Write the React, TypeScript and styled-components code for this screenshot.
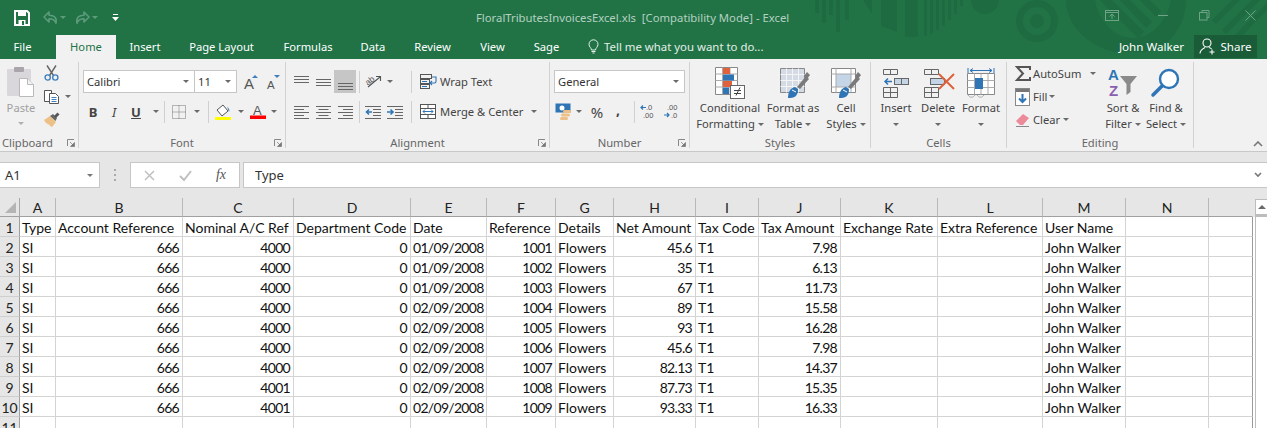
import React from "react";
import styled, { createGlobalStyle } from "styled-components";

const UI = `"Noto Sans", "Open Sans", "Liberation Sans", sans-serif`;
const CELL = `Lato, "Liberation Sans", sans-serif`;

const Global = createGlobalStyle`
  html, body { margin: 0; padding: 0; height: 428px; overflow: hidden; background: #fff; }
  #root { width: 1267px; height: 428px; overflow: hidden; }
`;

const Page = styled.div`
  width: 1267px; height: 428px; overflow: hidden; display: flex; flex-direction: column;
  font-family: ${UI}; background: #e6e6e6;
`;
const Head = styled.header`
  position: relative; height: 59px; background: #217346; flex: none; overflow: hidden;
`;
const Deco = styled.svg`
  position: absolute; left: 0; top: 0; pointer-events: none;
`;
const TitleRow = styled.div`
  position: relative; height: 35px; display: flex; align-items: center; padding-left: 13px;
`;
const Slot = styled.div<{ $w: number }>`
  width: ${p => p.$w}px; flex: none; display: flex; align-items: center; justify-content: center; gap: 3px;
`;
const TitleText = styled.div`
  position: absolute; left: 476px; top: 10px; font-size: 11.3px; line-height: 16px; color: #b3d0c0; white-space: pre;
`;
const WinButtons = styled.div`
  position: absolute; left: 1087px; top: 10px; height: 11px; display: flex; align-items: center;
`;
const TabRow = styled.nav`
  position: relative; height: 24px; display: flex; align-items: stretch;
`;
const Tab = styled.div<{ $w: number; $on?: boolean }>`
  width: ${p => p.$w}px; flex: none; display: flex; align-items: center; justify-content: center;
  font-size: 11.2px; padding-bottom: 1px; box-sizing: border-box;
  color: ${p => (p.$on ? "#217346" : "#fff")};
  background: ${p => (p.$on ? "#f1f1f1" : "transparent")};
`;
const TellMe = styled.div`
  display: flex; align-items: center; gap: 5px; margin-left: 14px; color: #e3efe8; font-size: 11.4px; padding-bottom: 1px;
`;
const User = styled.div`
  margin-left: auto; display: flex; align-items: center; color: #fff; font-size: 11.6px; padding-bottom: 1px;
`;
const Share = styled.div`
  margin: 0 10px 1px 10px; height: 23px; width: 63px; background: #1a5c38; color: #fff; display: flex; align-items: center;
  justify-content: center; gap: 4px; font-size: 11.6px; box-sizing: border-box;
`;

const Ribbon = styled.section`
  height: 93px; flex: none; background: #f1f1f1; border-bottom: 1px solid #c8c8c8; box-sizing: border-box;
  display: flex; padding-top: 3px; position: relative;
`;
const Group = styled.div<{ $w: number }>`
  width: ${p => p.$w}px; flex: none; height: 86px; box-sizing: border-box; border-right: 1px solid #d2d2d2;
  display: flex; flex-direction: column; position: relative;
`;
const GroupBody = styled.div`
  height: 74px; flex: none; display: flex;
`;
const GroupLabel = styled.div<{ $left?: boolean }>`
  height: 12px; line-height: 14px; font-size: 11.2px; color: #666;
  text-align: ${p => (p.$left ? "left" : "center")}; padding-left: ${p => (p.$left ? 2 : 0)}px;
`;
const Launcher = styled.svg`
  position: absolute; right: 3px; bottom: 1px;
`;
const Stack = styled.div<{ $pl?: number; $gap?: number; $pt?: number; $w?: number }>`
  display: flex; flex-direction: column; padding-left: ${p => p.$pl ?? 0}px; gap: ${p => p.$gap ?? 6}px; padding-top: ${p => p.$pt ?? 8}px;
  ${p => (p.$w ? `width: ${p.$w}px; flex: none;` : "")}
`;
const Row = styled.div<{ $h?: number }>`
  display: flex; align-items: center; height: ${p => p.$h ?? 23}px;
`;
const Sep = styled.div<{ $m?: number }>`
  width: 1px; height: 22px; background: #d0d0d0; flex: none; margin: 0 ${p => p.$m ?? 0}px;
`;
const Caret = styled.span<{ $c?: string }>`
  display: inline-block; width: 0; height: 0; flex: none;
  border-left: 3px solid transparent; border-right: 3px solid transparent; border-top: 3px solid ${p => p.$c ?? "#6a6a6a"};
`;
const Combo = styled.div<{ $w: number; $joined?: boolean }>`
  width: ${p => p.$w}px; height: 23px; flex: none; box-sizing: border-box; background: #fff; border: 1px solid #c6c6c6;
  ${p => (p.$joined ? "border-right: none;" : "")}
  display: flex; align-items: center; justify-content: space-between; padding: 0 5px 0 3px;
  font-family: ${UI}; font-size: 11.2px; color: #333;
`;
const Active = styled.div`
  width: 22px; height: 23px; background: #c6c6c6; display: flex; align-items: flex-end; justify-content: center; flex: none;
  padding-bottom: 3px; box-sizing: border-box;
`;
const TopAligned = styled(Slot)`
  padding-bottom: 6px;
`;
const BtnText = styled.span<{ $c?: string }>`
  font-size: 11.2px; color: ${p => p.$c ?? "#444"}; white-space: nowrap;
`;
const Percent = styled(BtnText)`
  font-size: 15px;
`;
const Comma = styled(BtnText)`
  font-size: 14px; font-weight: 700; padding-bottom: 4px;
`;
const FontLetter = styled.span<{ $b?: boolean; $i?: boolean; $u?: boolean }>`
  font-family: ${UI}; font-size: 13px; color: #444;
  font-weight: ${p => (p.$b ? 700 : 400)}; font-style: ${p => (p.$i ? "italic" : "normal")};
  text-decoration: ${p => (p.$u ? "underline" : "none")};
`;
const PasteCol = styled.div`
  width: 40px; flex: none; display: flex; flex-direction: column; align-items: center; padding: 4px 0 0 0; margin-left: 1px;
`;
const PasteText = styled.div`
  font-size: 11.2px; color: #a0a0a0; margin-top: 4px; line-height: 14px;
`;
const PasteCaret = styled(Slot)`
  margin-top: 7px;
`;
const ClipCol = styled.div`
  display: flex; flex-direction: column; width: 36px; gap: 5px; padding-top: 3px;
`;
const CopyRow = styled(Slot)`
  justify-content: flex-start; gap: 6px; height: 21px; padding-left: 3px; box-sizing: border-box;
`;
const Big = styled.div<{ $w: number }>`
  width: ${p => p.$w}px; flex: none; display: flex; flex-direction: column; align-items: center; padding-top: 4px;
`;
const BigIcon = styled.div<{ $shift?: number }>`
  height: 34px; display: flex; align-items: center; justify-content: center; padding-left: ${p => p.$shift ?? 0}px;
`;
const BigText = styled.div`
  font-size: 11.2px; color: #444; line-height: 16px; text-align: center; white-space: nowrap;
  display: flex; flex-direction: column; align-items: center;
`;
const CaretLine = styled.span`
  display: flex; align-items: center; gap: 3px; height: 16px;
`;
const Collapse = styled.svg`
  position: absolute; left: 1253px; top: 82px;
`;

const FormulaBar = styled.div`
  height: 46px; flex: none; box-sizing: border-box; padding: 10px 0 0 0; display: flex; align-items: flex-start; background: #e6e6e6;
`;
const NameBox = styled.div`
  width: 100px; height: 26px; box-sizing: border-box; background: #fff; border: 1px solid #c6c6c6; border-left: none; flex: none;
  display: flex; align-items: center; justify-content: space-between; padding: 0 6px 0 5px; font-size: 13px; color: #333;
`;
const Dots = styled.div`
  width: 30px; flex: none; height: 26px; display: flex; align-items: center; justify-content: center;
`;
const FxBox = styled.div`
  width: 110px; height: 26px; box-sizing: border-box; background: #fff; border: 1px solid #c6c6c6; flex: none; display: flex; align-items: center;
`;
const Fx = styled.span`
  font-family: "Liberation Serif", serif; font-style: italic; font-size: 14px; color: #555;
`;
const Input = styled.div`
  margin-left: 3px; flex: 1; height: 26px; box-sizing: border-box; background: #fff; border: 1px solid #c6c6c6; border-right: none;
  display: flex; align-items: center; justify-content: space-between; padding: 0 5px 0 11px; font-size: 13px; color: #333;
`;

const Sheet = styled.main`
  flex: 1; display: flex; min-height: 0; overflow: hidden;
`;
const COLS = [36, 127, 111, 117, 76, 69, 58, 82, 63, 82, 97, 105, 83, 83, 44];
const Grid = styled.div`
  width: 1253px; flex: none; display: grid; grid-template-columns: 20px ${COLS.map(c => c + "px").join(" ")};
  grid-template-rows: 19px repeat(11, 20px); background: #fff; align-content: start;
`;
const Corner = styled.div`
  background: #e6e6e6; border-right: 1px solid #a8a8a8; border-bottom: 1px solid #a0a0a0; box-sizing: border-box;
  display: flex; align-items: flex-end; justify-content: flex-end; padding: 0 2px 2px 0;
`;
const ColHead = styled.div<{ $last?: boolean }>`
  background: #e6e6e6; border-right: 1px solid ${p => (p.$last ? "#e6e6e6" : "#b8b8b8")}; border-bottom: 1px solid #a0a0a0; box-sizing: border-box;
  display: flex; align-items: center; justify-content: center; font-family: ${CELL}; font-size: 14px; color: #222; padding-top: 1px;
`;
const RowHead = styled.div`
  background: #e6e6e6; border-right: 1px solid #a0a0a0; border-bottom: 1px solid #cfcfcf; box-sizing: border-box;
  display: flex; align-items: center; justify-content: center; font-family: ${CELL}; font-size: 14px; color: #222; padding-top: 1px;
`;
const Cell = styled.div<{ $r?: boolean; $last?: boolean }>`
  border-right: 1px solid ${p => (p.$last ? "#9a9a9a" : "#d4d4d4")}; border-bottom: 1px solid #d4d4d4; box-sizing: border-box; background: #fff;
  font-family: ${CELL}; font-size: 14px; color: #111; line-height: 19px; white-space: nowrap; overflow: hidden;
  text-align: ${p => (p.$r ? "right" : "left")}; padding: 1px 3px 0 2px;
  letter-spacing: ${p => (p.$r ? "-0.7px" : "0")};
`;
const Scroll = styled.div`
  flex: 1; display: flex; flex-direction: column; background: #fff;
`;
const ScrollTop = styled.div`
  height: 19px; background: #e6e6e6; flex: none; box-sizing: border-box; padding: 1px 0 0 2px;
`;
const ScrollUp = styled.div`
  height: 18px; background: #fff; border: 1px solid #bdbdbd; border-bottom-width: 3px; border-right: none; box-sizing: border-box;
  display: flex; align-items: center; justify-content: center;
`;
const ScrollUpArrow = styled.span`
  width: 0; height: 0; border-left: 4px solid transparent; border-right: 4px solid transparent; border-bottom: 4px solid #6a6a6a;
`;
const ScrollTrack = styled.div`
  flex: 1; background: #fff; margin-left: 2px; border-left: 1px solid #bdbdbd;
`;

const Svg = styled.svg`
  display: block; flex: none; overflow: visible;
`;
const Ico = ({ w, h, children }: { w: number; h: number; children: React.ReactNode }) => (
  <Svg width={w} height={h} viewBox={`0 0 ${w} ${h}`}>{children}</Svg>
);

const Launch = () => (
  <Launcher width={8} height={8} viewBox="0 0 8 8">
    <path d="M0.5 7V.5H7" fill="none" stroke="#888" />
    <path d="M3 3l3.5 3.5M7.5 3.5v4h-4z" fill="#777" stroke="#777" strokeWidth=".7" />
  </Launcher>
);

const Save = () => (
  <Ico w={16} h={16}>
    <path d="M1 1h12l2 2v12H1z" fill="none" stroke="#fff" strokeWidth="2" />
    <rect x="4" y="1" width="8" height="5" fill="#fff" />
    <rect x="4.5" y="10" width="7" height="5" fill="#fff" />
    <rect x="8" y="11" width="2" height="4" fill="#217346" />
  </Ico>
);
const Undo = ({ flip }: { flip?: boolean }) => (
  <Ico w={15} h={13}>
    <g transform={flip ? "translate(15 0) scale(-1 1)" : undefined}>
      <path d="M1 6l5-5v3.2c5 0 8 2 7 8-1-3-3-4.5-7-4.5V11z" fill="none" stroke="#5d9c7b" strokeWidth="1.6" strokeLinejoin="round" />
    </g>
  </Ico>
);
const Customize = () => (
  <Ico w={7} h={8}>
    <rect x="1" y="0" width="5" height="1" fill="#fff" />
    <path d="M0 3h7L3.5 7z" fill="#fff" />
  </Ico>
);
const WinTile = () => (
  <Ico w={14} h={11}>
    <rect x=".5" y=".5" width="13" height="10" fill="none" stroke="#6ea386" />
    <path d="M1 2.5h12M7 9V4.5M4.5 6.5 7 4l2.5 2.500" fill="none" stroke="#6ea386" />
  </Ico>
);
const WinMin = () => <Ico w={10} h={1}><rect width="10" height="1" fill="#6ea386" /></Ico>;
const WinMax = () => (
  <Ico w={11} h={11}>
    <path d="M3 2.5V.5h7v7H8" fill="none" stroke="#6ea386" />
    <rect x=".5" y="2.5" width="7.5" height="7.5" fill="#217346" stroke="#6ea386" />
  </Ico>
);
const WinClose = () => <Ico w={11} h={11}><path d="M.5.5l10 10M10.5.5l-10 10" stroke="#6ea386" /></Ico>;

const Bulb = () => (
  <Ico w={11} h={15}>
    <path d="M3.5 11c0-2-2.5-3-2.5-5.7a4.5 4.5 0 019 0C10 8 7.5 9 7.5 11z" fill="none" stroke="#e3efe8" />
    <path d="M3.5 12.5h4M4.5 14h2" stroke="#e3efe8" />
  </Ico>
);
const Person = () => (
  <Ico w={17} h={17}>
    <circle cx="8" cy="5" r="4" fill="none" stroke="#fff" strokeWidth="1.1" />
    <path d="M1 15.5c0-3.500 3-5 5-6M10 9.500c1 .3 2 .8 2.600 1.500" fill="none" stroke="#fff" strokeWidth="1.1" />
    <path d="M13 11.500v5M10.500 14h5" stroke="#fff" strokeWidth="1.1" />
  </Ico>
);

const PasteIcon = () => (
  <Ico w={30} h={31}>
    <rect x="1" y="3" width="24" height="27" rx="1" fill="#dad7dc" />
    <rect x="8" y="1" width="10" height="5" rx="1" fill="#a9a5aa" />
    <path d="M13.500 12.500h8l6 6v12h-14z" fill="#fff" stroke="#b9b9b9" />
    <path d="M21.500 12.500v6h6" fill="#f1f1f1" stroke="#b9b9b9" />
  </Ico>
);
const Scissors = () => (
  <Ico w={15} h={16}>
    <path d="M3 .5l6.500 10M12 .5L5.500 10.500" stroke="#666" strokeWidth="1.4" fill="none" />
    <circle cx="3.700" cy="12.500" r="2.600" fill="none" stroke="#3f7fbf" strokeWidth="1.4" />
    <circle cx="11.300" cy="12.500" r="2.600" fill="none" stroke="#3f7fbf" strokeWidth="1.4" />
  </Ico>
);
const Copy = () => (
  <Ico w={15} h={14}>
    <path d="M.5.5h7v11h-7z" fill="#fff" stroke="#555" />
    <path d="M5.500 3.500h6l3 3v7h-9z" fill="#fff" stroke="#555" />
    <path d="M7.500 7.500h5M7.500 9.500h5M7.500 11.500h5" stroke="#3f7fbf" />
  </Ico>
);
const Brush = () => (
  <Ico w={17} h={15}>
    <path d="M1 8l6-4 6 6-4 5-2-1-1-2-1 1-1-2-1 .3z" fill="#edc087" />
    <path d="M7 4l3-2 4 4-1.500 3z" fill="#666" />
    <path d="M11 4l3.500-3.500 2 2L13 6z" fill="#555" />
  </Ico>
);
const GrowA = ({ up }: { up?: boolean }) => (
  <Ico w={14} h={16}>
    {up
      ? <text x="0" y="15" fontFamily="Liberation Sans" fontSize="15" fill="#555">A</text>
      : <text x="1" y="15" fontFamily="Liberation Sans" fontSize="11.500" fill="#555">A</text>}
    <path d={up ? "M8 4l3-3 3 3z" : "M8 1h6l-3 3z"} fill="#3f7fbf" />
  </Ico>
);
const AlignV = () => (
  <Ico w={15} h={8}>
    <rect y="1" width="15" height="1" fill="#666" />
    <rect y="4" width="15" height="1" fill="#666" />
    <rect y="7" width="15" height="1" fill="#666" />
  </Ico>
);
const AlignH = ({ k }: { k: "l" | "c" | "r" }) => {
  const rows = [15, 10, 15, 10, 15];
  return (
    <Ico w={15} h={14}>
      {rows.map((w, i) => (
        <rect key={i} x={k === "l" ? 0 : k === "c" ? (15 - w) / 2 : 15 - w} y={1 + i * 3} width={w} height={1} fill="#666" />
      ))}
    </Ico>
  );
};
const Orient = () => (
  <Ico w={17} h={15}>
    <text x="1" y="9" fontFamily="Liberation Sans" fontSize="8.500" fill="#555" transform="rotate(-38 6 8)">ab</text>
    <path d="M3 13L15 3M11 2.500h4.500V7" fill="none" stroke="#555" strokeWidth="1.1" />
  </Ico>
);
const Indent = ({ inc }: { inc?: boolean }) => (
  <Ico w={16} h={14}>
    {[1, 4, 7, 10, 13].map((y, i) => (
      <rect key={y} x={i === 0 || i === 4 ? 0 : 8} y={y} width={i === 0 || i === 4 ? 16 : 8} height={1} fill="#666" />
    ))}
    <path d={inc ? "M0 7h5M3.500 4.500 6 7l-2.500 2.500" : "M7 7H1.500M4 4.500 1.500 7 4 9.500"} fill="none" stroke="#2f75b5" strokeWidth="1.6" />
  </Ico>
);
const WrapIcon = () => (
  <Ico w={17} h={15}>
    <rect x=".5" y=".5" width="11" height="4" fill="none" stroke="#555" />
    <rect x=".5" y="5.500" width="9" height="4" fill="none" stroke="#555" />
    <rect x=".5" y="10.500" width="9" height="4" fill="none" stroke="#555" />
    <path d="M12 3h4v4.500c0 1-.5 1.500-1.500 1.500H10M12 7l-2 2 2 2" fill="none" stroke="#2f75b5" strokeWidth="1.1" />
    <path d="M2 7.500h5M2 12.500h5" stroke="#2f75b5" />
  </Ico>
);
const MergeIcon = () => (
  <Ico w={16} h={15}>
    <rect x=".5" y=".5" width="15" height="14" fill="#fff" stroke="#555" />
    <path d="M.5 4.500h15M.5 10.500h15M8 .5v4M8 10.500v4" stroke="#555" />
    <path d="M3 7.500h10M5 5.500l-2 2 2 2M11 5.500l2 2-2 2" fill="none" stroke="#2f75b5" />
  </Ico>
);
const BorderIcon = () => (
  <Ico w={14} h={14}>
    <path d="M.5.5h13v13h-13zM7 .5v13M.5 7h13" fill="none" stroke="#777" strokeDasharray="1 1" />
  </Ico>
);
const Fill = () => (
  <Ico w={17} h={16}>
    <path d="M2 6l6-5 5 6-6 5z" fill="#fff" stroke="#555" />
    <path d="M12 3c2 1 3 3 2 5l-1-3z" fill="#2f75b5" />
    <rect x="0" y="13" width="16" height="3" fill="#ffff00" />
  </Ico>
);
const FontColor = () => (
  <Ico w={16} h={15}>
    <text x="3" y="11" fontFamily="Liberation Sans" fontSize="13" fill="#555">A</text>
    <rect x="0" y="11.500" width="16" height="3.500" fill="#f00" />
  </Ico>
);
const Currency = () => (
  <Ico w={16} h={17}>
    <rect x=".5" y=".5" width="15" height="9" fill="#2f75b5" />
    <circle cx="7" cy="5" r="2.500" fill="#fff" />
    <rect x="8" y="7" width="8" height="3" rx="1.500" fill="#edc087" />
    <rect x="6" y="10.500" width="9" height="3" rx="1.500" fill="#edc087" />
    <rect x="5" y="14" width="8" height="3" rx="1.500" fill="#edc087" />
  </Ico>
);
const DecIcon = ({ more }: { more?: boolean }) => (
  <Ico w={15} h={15}>
    <text x={more ? 3 : 6} y="6" fontFamily="Liberation Sans" fontSize="7.500" fill="#555">{more ? ".00" : ".0"}</text>
    <text x={more ? 7 : 3} y="14" fontFamily="Liberation Sans" fontSize="7.500" fill="#555">{more ? ".0" : ".00"}</text>
    <path d={more ? "M0 11h5M3 9l2 2-2 2" : "M6 3.500H1M3 1.500l-2 2 2 2"} fill="none" stroke="#2f75b5" strokeWidth="1.2" />
  </Ico>
);
const CondFormat = () => (
  <Ico w={30} h={32}>
    <path d="M.5.500h22v27h-22z" fill="#fff" stroke="#888" />
    <path d="M7.500.500v27M15 .500v27M.5 7h22M.5 13.500h22M.5 20h22" stroke="#aaa" fill="none" />
    <rect x="8" y="1" width="7" height="6" fill="#e0613a" />
    <rect x="8" y="7.500" width="11" height="6" fill="#2f75b5" />
    <rect x="8" y="14" width="9" height="6" fill="#e0613a" />
    <rect x="8" y="20.500" width="6" height="6.500" fill="#2f75b5" />
    <rect x="15.500" y="18.500" width="14" height="13" fill="#fff" stroke="#666" />
    <path d="M19 23.500h7M19 26.500h7M25 20.500l-4 8" stroke="#444" fill="none" />
  </Ico>
);
const FormatTable = () => (
  <Ico w={30} h={32}>
    <path d="M.5 1.500h24v24h-24z" fill="#d4dbe5" stroke="#888" />
    <path d="M6.500 1.500v24M12.500 1.500v24M18.500 1.500v24M.5 7.500h24M.5 13.500h24M.5 19.500h24" stroke="#f4f4f4" fill="none" />
    <path d="M17 20l9-11 3 3-9 10z" fill="#7a7a7a" />
    <path d="M24 9l3-4 3 3-3 4z" fill="#7a7a7a" />
    <path d="M8 31c6 0 10-1 10-9l-3-2c-5 1-7 6-7 11z" fill="#2f75b5" />
    <path d="M12 23l4 2" stroke="#fff" />
  </Ico>
);
const CellStyles = () => (
  <Ico w={30} h={32}>
    <path d="M.5 1.500h24v24h-24z" fill="#fff" stroke="#888" />
    <rect x="5" y="7" width="15" height="13" fill="#c5d5e8" />
    <path d="M5 1.500v24M20 1.500v24M.5 7h24M.5 20h24" stroke="#aaa" fill="none" />
    <path d="M17 20l9-11 3 3-9 10z" fill="#7a7a7a" />
    <path d="M24 9l3-4 3 3-3 4z" fill="#7a7a7a" />
    <path d="M8 31c6 0 10-1 10-9l-3-2c-5 1-7 6-7 11z" fill="#2f75b5" />
    <path d="M12 23l4 2" stroke="#fff" />
  </Ico>
);
const InsertIcon = () => (
  <Ico w={26} h={29}>
    <path d="M.5.500h14v5h-14zM7.500.500v5M.5 18.500h14v10h-14zM7.500 18.500v10M.5 23.500h14" fill="none" stroke="#666" />
    <rect x="11.500" y="9.500" width="14" height="6" fill="#c5d5e8" stroke="#666" />
    <path d="M18.500 9.500v6" stroke="#666" />
    <path d="M9 12.500H2M5 9.500l-3 3 3 3" fill="none" stroke="#2f75b5" strokeWidth="1.500" />
  </Ico>
);
const DeleteIcon = () => (
  <Ico w={32} h={29}>
    <path d="M.5.500h14v5h-14zM7.500.500v5M.5 18.500h14v10h-14zM7.500 18.500v10M.5 23.500h14" fill="none" stroke="#666" />
    <rect x="6.500" y="9.500" width="14" height="6" fill="#c5d5e8" stroke="#666" />
    <path d="M15 5l15 15M30 5L15 20" stroke="#e0613a" strokeWidth="2" />
  </Ico>
);
const FormatIcon = () => (
  <Ico w={28} h={31}>
    <path d="M1 0v5M27 0v5M3 2.500h22M6 .500 3 2.500l3 2M22 .500l3 2-3 2" fill="none" stroke="#2f75b5" />
    <path d="M.5 5.500h27v21h-27z" fill="#fff" stroke="#888" />
    <path d="M7.500 5.500v21M14 5.500v21M21 5.500v21M.5 12.500h27M.5 19.500h27" stroke="#aaa" fill="none" />
    <rect x="8" y="10" width="8" height="11" fill="#2f75b5" />
    <path d="M1 27c2 3 5 3 7 0M10 27c2 3 5 3 7 0" fill="none" stroke="#aaa" />
  </Ico>
);
const Sigma = () => (
  <Ico w={16} h={15}>
    <path d="M15 4V1H2l6 6.500L2 14h13v-3" fill="none" stroke="#555" strokeWidth="2" />
  </Ico>
);
const FillDown = () => (
  <Ico w={15} h={18}>
    <rect x=".5" y=".5" width="14" height="17" fill="#fff" stroke="#888" />
    <rect x="1" y="1" width="13" height="3" fill="#777" />
    <path d="M7.500 6v8M4 10.500l3.500 3.500 3.500-3.500" fill="none" stroke="#2f75b5" strokeWidth="2" />
  </Ico>
);
const Eraser = () => (
  <Ico w={15} h={15}>
    <path d="M1 9l7-7 6 4-6 7H5z" fill="#ec8a9a" />
    <path d="M1 14.500h13" stroke="#888" />
  </Ico>
);
const SortIcon = () => (
  <Ico w={30} h={30}>
    <text x="0" y="12" fontFamily="Liberation Sans" fontWeight="700" fontSize="15" fill="#2f75b5">A</text>
    <text x="1" y="28" fontFamily="Liberation Sans" fontWeight="700" fontSize="15" fill="#8a5fb0">Z</text>
    <path d="M12 8h17l-6.500 8v8l-4 3V16z" fill="#8a8a8a" />
  </Ico>
);
const FindIcon = () => (
  <Ico w={30} h={30}>
    <circle cx="18" cy="11" r="9" fill="#fff" stroke="#2f75b5" strokeWidth="2.400" />
    <path d="M11 18L2 27" stroke="#2f75b5" strokeWidth="3.500" strokeLinecap="round" />
  </Ico>
);
const Triangle = () => (
  <Ico w={12} h={12}><path d="M11 0v11H0z" fill="#b4b4b4" /></Ico>
);
const CloseX = () => <Ico w={11} h={11}><path d="M1 1l9 9M10 1l-9 9" stroke="#c0c0c0" strokeWidth="1.500" /></Ico>;
const CheckX = () => <Ico w={13} h={11}><path d="M1 6l4 4 7-9" fill="none" stroke="#c0c0c0" strokeWidth="2" /></Ico>;
const DotsIcon = () => (
  <Ico w={3} h={13}>
    <rect y="0" width="2" height="2" fill="#aaa" /><rect y="5" width="2" height="2" fill="#aaa" /><rect y="10" width="2" height="2" fill="#aaa" />
  </Ico>
);
const Chevron = () => <Ico w={8} h={6}><path d="M1 1l3 3 3-3" fill="none" stroke="#777" strokeWidth="1.600" /></Ico>;

const TABS: [string, number][] = [["Insert", 58], ["Page Layout", 95], ["Formulas", 78], ["Data", 52], ["Review", 67], ["View", 53], ["Sage", 55]];
const HEADERS = ["Type", "Account Reference", "Nominal A/C Ref", "Department Code", "Date", "Reference", "Details", "Net Amount", "Tax Code", "Tax Amount", "Exchange Rate", "Extra Reference", "User Name", "", ""];
const LETTERS = ["A", "B", "C", "D", "E", "F", "G", "H", "I", "J", "K", "L", "M", "N", ""];
const DATA: [string, string, string, string, string][] = [
  ["4000", "01/09/2008", "1001", "45.6", "7.98"],
  ["4000", "01/09/2008", "1002", "35", "6.13"],
  ["4000", "01/09/2008", "1003", "67", "11.73"],
  ["4000", "02/09/2008", "1004", "89", "15.58"],
  ["4000", "02/09/2008", "1005", "93", "16.28"],
  ["4000", "02/09/2008", "1006", "45.6", "7.98"],
  ["4000", "02/09/2008", "1007", "82.13", "14.37"],
  ["4001", "02/09/2008", "1008", "87.73", "15.35"],
  ["4001", "02/09/2008", "1009", "93.33", "16.33"],
];

const Decoration = () => (
  <Deco width={1267} height={59} viewBox="0 0 1267 59">
    <g fill="#1f6b41">
      {[[815, 13], [822, 23], [829, 15], [836, 32], [845, 20]].map(([x, h]) => <rect key={x} x={x} y={0} width={4} height={h} />)}
      <path d="M863 0l9 14V0zM881 0h16v32l-16-6zM905 0h13v37h-13zM924 0h3v36h-3zM930 0h3v34h-3zM936 0h3v30h-3zM942 0h3v26h-3zM948 0h3v20h-3zM954 0h3v14h-3zM960 0h3v6h-3z" />
      <circle cx="985" cy="0" r="14" />
      <path fillRule="evenodd" d="M1037 0a21 21 0 100 42 21 21 0 000-42zm0 7a14 14 0 110 28 14 14 0 010-28z" />
      <circle cx="1037" cy="21" r="7" />
      <path d="M1066 0h120c0 28-20 52-45 52h-28c-28-8-47-28-47-52z" />
      <path d="M1095 0h76c-4 22-20 38-38 38-18 0-34-16-38-38z" fill="#217346" />
      <path d="M1100 0l38 38 6-6-32-32zM1120 0l26 28 6-6-22-22zM1140 0l16 17 5-6-11-11z" fill="#1f6b41" />
      <path d="M1212 20l20-20h8l-24 24zM1222 30l30-30h8l-34 34zM1235 35l35-35v7l-30 31z" />
    </g>
  </Deco>
);

export default function App() {
  return (
    <Page>
      <Global />
      <Head>
        <Decoration />
        <TitleRow>
          <Slot $w={18}><Save /></Slot>
          <Slot $w={12} />
          <Undo /><Slot $w={10}><Caret $c="#5d9c7b" /></Slot>
          <Slot $w={7} />
          <Undo flip /><Slot $w={10}><Caret $c="#5d9c7b" /></Slot>
          <Slot $w={12} />
          <Customize />
        </TitleRow>
        <TitleText>FloralTributesInvoicesExcel.xls  [Compatibility Mode] - Excel</TitleText>
        <WinButtons>
          <Slot $w={50}><WinTile /></Slot>
          <Slot $w={52}><WinMin /></Slot>
          <Slot $w={31}><WinMax /></Slot>
          <Slot $w={60}><WinClose /></Slot>
        </WinButtons>
        <TabRow>
          <Tab $w={45}>File</Tab>
          <Slot $w={11} />
          <Tab $w={60} $on>Home</Tab>
          {TABS.map(([t, w]) => <Tab key={t} $w={w}>{t}</Tab>)}
          <TellMe><Bulb />Tell me what you want to do...</TellMe>
          <User>John Walker<Share><Person />Share</Share></User>
        </TabRow>
      </Head>

      <Ribbon>
        <Group $w={79}>
          <GroupBody>
            <PasteCol>
              <PasteIcon />
              <PasteText>Paste</PasteText>
              <PasteCaret $w={20}><Caret $c="#b0b0b0" /></PasteCaret>
            </PasteCol>
            <ClipCol>
              <Slot $w={20}><Scissors /></Slot>
              <CopyRow $w={36}><Copy /><Caret /></CopyRow>
              <Slot $w={20}><Brush /></Slot>
            </ClipCol>
          </GroupBody>
          <GroupLabel $left>Clipboard</GroupLabel>
          <Launch />
        </Group>

        <Group $w={207}>
          <GroupBody>
            <Stack $pl={4}>
              <Row>
                <Combo $w={111} $joined>Calibri<Caret /></Combo>
                <Combo $w={43}>11<Caret /></Combo>
                <Slot $w={6} />
                <Slot $w={15}><GrowA up /></Slot>
                <Slot $w={7} />
                <Slot $w={15}><GrowA /></Slot>
              </Row>
              <Row $h={25}>
                <Slot $w={20}><FontLetter $b>B</FontLetter></Slot>
                <Slot $w={22}><FontLetter $i>I</FontLetter></Slot>
                <Slot $w={22}><FontLetter $u $b>U</FontLetter></Slot>
                <Slot $w={17}><Caret /></Slot>
                <Sep />
                <Slot $w={28}><BorderIcon /></Slot>
                <Slot $w={8}><Caret /></Slot>
                <Slot $w={7} />
                <Sep />
                <Slot $w={28}><Fill /></Slot>
                <Slot $w={8}><Caret /></Slot>
                <Slot $w={26}><FontColor /></Slot>
                <Slot $w={6}><Caret /></Slot>
              </Row>
            </Stack>
          </GroupBody>
          <GroupLabel>Font</GroupLabel>
          <Launch />
        </Group>

        <Group $w={264}>
          <GroupBody>
            <Stack $pl={4}>
              <Row>
                <TopAligned $w={22}><AlignV /></TopAligned>
                <Slot $w={22}><AlignV /></Slot>
                <Active><AlignV /></Active>
                <Sep $m={3} />
                <Slot $w={20}><Orient /></Slot>
                <Slot $w={14}><Caret /></Slot>
                <Slot $w={14} />
                <Sep />
                <Slot $w={8} />
                <WrapIcon />
                <Slot $w={3} />
                <BtnText>Wrap Text</BtnText>
              </Row>
              <Row $h={25}>
                <Slot $w={22}><AlignH k="l" /></Slot>
                <Slot $w={22}><AlignH k="c" /></Slot>
                <Slot $w={22}><AlignH k="r" /></Slot>
                <Sep $m={3} />
                <Slot $w={20}><Indent /></Slot>
                <Slot $w={24}><Indent inc /></Slot>
                <Slot $w={4} />
                <Sep />
                <Slot $w={8} />
                <MergeIcon />
                <Slot $w={4} />
                <BtnText>Merge &amp; Center</BtnText>
                <Slot $w={22}><Caret /></Slot>
              </Row>
            </Stack>
          </GroupBody>
          <GroupLabel>Alignment</GroupLabel>
          <Launch />
        </Group>

        <Group $w={140}>
          <GroupBody>
            <Stack $pl={4}>
              <Row><Combo $w={131}>General<Caret /></Combo></Row>
              <Row $h={25}>
                <Slot $w={18}><Currency /></Slot>
                <Slot $w={14}><Caret /></Slot>
                <Slot $w={22}><Percent>%</Percent></Slot>
                <Slot $w={20}><Comma>,</Comma></Slot>
                <Slot $w={6} />
                <Sep />
                <Slot $w={24}><DecIcon /></Slot>
                <Slot $w={24}><DecIcon more /></Slot>
              </Row>
            </Stack>
          </GroupBody>
          <GroupLabel>Number</GroupLabel>
          <Launch />
        </Group>

        <Group $w={181}>
          <GroupBody>
            <Slot $w={8} />
            <Big $w={64}>
              <BigIcon><CondFormat /></BigIcon>
              <BigText>Conditional<CaretLine>Formatting <Caret /></CaretLine></BigText>
            </Big>
            <Big $w={62}>
              <BigIcon $shift={4}><FormatTable /></BigIcon>
              <BigText>Format as<CaretLine>Table <Caret /></CaretLine></BigText>
            </Big>
            <Big $w={44}>
              <BigIcon><CellStyles /></BigIcon>
              <BigText>Cell<CaretLine>Styles <Caret /></CaretLine></BigText>
            </Big>
          </GroupBody>
          <GroupLabel>Styles</GroupLabel>
        </Group>

        <Group $w={136}>
          <GroupBody>
            <Slot $w={4} />
            <Big $w={42}>
              <BigIcon><InsertIcon /></BigIcon>
              <BigText>Insert<CaretLine><Caret /></CaretLine></BigText>
            </Big>
            <Big $w={42}>
              <BigIcon $shift={3}><DeleteIcon /></BigIcon>
              <BigText>Delete<CaretLine><Caret /></CaretLine></BigText>
            </Big>
            <Big $w={44}>
              <BigIcon><FormatIcon /></BigIcon>
              <BigText>Format<CaretLine><Caret /></CaretLine></BigText>
            </Big>
          </GroupBody>
          <GroupLabel>Cells</GroupLabel>
        </Group>

        <Group $w={187}>
          <GroupBody>
            <Stack $pl={5} $gap={0} $pt={0} $w={90}>
              <Row><Slot $w={21}><Sigma /></Slot><BtnText>AutoSum</BtnText><Slot $w={24}><Caret /></Slot></Row>
              <Row><Slot $w={21}><FillDown /></Slot><BtnText>Fill</BtnText><Slot $w={10}><Caret /></Slot></Row>
              <Row><Slot $w={21}><Eraser /></Slot><BtnText>Clear</BtnText><Slot $w={12}><Caret /></Slot></Row>
            </Stack>
            <Big $w={42}>
              <BigIcon><SortIcon /></BigIcon>
              <BigText>Sort &amp;<CaretLine>Filter <Caret /></CaretLine></BigText>
            </Big>
            <Big $w={44}>
              <BigIcon><FindIcon /></BigIcon>
              <BigText>Find &amp;<CaretLine>Select <Caret /></CaretLine></BigText>
            </Big>
          </GroupBody>
          <GroupLabel>Editing</GroupLabel>
        </Group>
        <Collapse width={10} height={6} viewBox="0 0 10 6"><path d="M1 5l4-4 4 4" fill="none" stroke="#777" strokeWidth="1.600" /></Collapse>
      </Ribbon>

      <FormulaBar>
        <NameBox>A1<Caret $c="#777" /></NameBox>
        <Dots><DotsIcon /></Dots>
        <FxBox>
          <Slot $w={36}><CloseX /></Slot>
          <Slot $w={36}><CheckX /></Slot>
          <Slot $w={36}><Fx>fx</Fx></Slot>
        </FxBox>
        <Input>Type<Chevron /></Input>
      </FormulaBar>

      <Sheet>
        <Grid>
          <Corner><Triangle /></Corner>
          {LETTERS.map((l, i) => <ColHead key={i} $last={i === 14}>{l}</ColHead>)}
          <RowHead>1</RowHead>
          {HEADERS.map((h, i) => <Cell key={i} $last={i === 14}>{h}</Cell>)}
          {DATA.map((d, r) => (
            <React.Fragment key={r}>
              <RowHead>{r + 2}</RowHead>
              <Cell>SI</Cell>
              <Cell $r>666</Cell>
              <Cell $r>{d[0]}</Cell>
              <Cell $r>0</Cell>
              <Cell $r>{d[1]}</Cell>
              <Cell $r>{d[2]}</Cell>
              <Cell>Flowers</Cell>
              <Cell $r>{d[3]}</Cell>
              <Cell>T1</Cell>
              <Cell $r>{d[4]}</Cell>
              <Cell /><Cell />
              <Cell>John Walker</Cell>
              <Cell /><Cell $last />
            </React.Fragment>
          ))}
          <RowHead>11</RowHead>
          {LETTERS.map((_, i) => <Cell key={i} $last={i === 14} />)}
        </Grid>
        <Scroll>
          <ScrollTop><ScrollUp><ScrollUpArrow /></ScrollUp></ScrollTop>
          <ScrollTrack />
        </Scroll>
      </Sheet>
    </Page>
  );
}
